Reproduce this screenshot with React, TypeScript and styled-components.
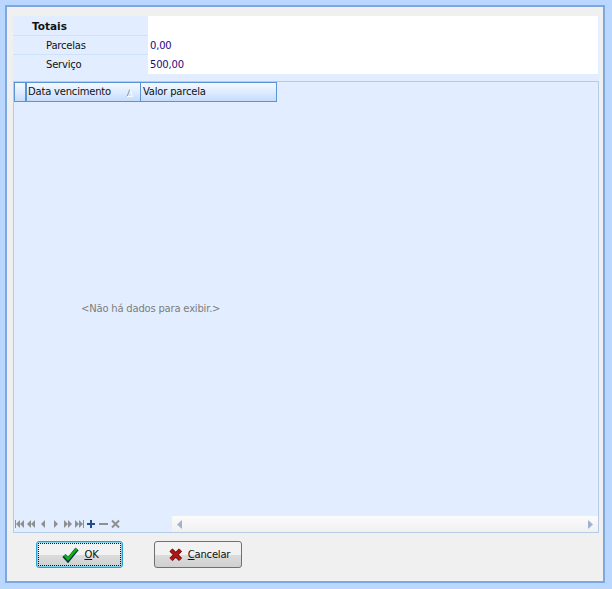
import { createGlobalStyle } from "styled-components";
import styled from "styled-components";

const GlobalStyle = createGlobalStyle`
  html, body {
    margin: 0;
    padding: 0;
    background: #b9d7ff;
  }
  * {
    box-sizing: border-box;
  }
`;

const Frame = styled.div`
  width: 612px;
  height: 589px;
  padding: 5px 7px 6px 5px;
  background: #b9d7ff;
  font-family: "DejaVu Sans", "Liberation Sans", sans-serif;
  font-size: 10px;
  letter-spacing: -0.2px;
  overflow: hidden;
`;

const Dialog = styled.div`
  width: 100%;
  height: 100%;
  border: 2px solid #7ea6e0;
  background: #f0f0f0;
  padding: 9px 4px 0 6px;
  display: flex;
  flex-direction: column;
`;

const Totals = styled.div`
  height: 65px;
  padding-right: 1px;
  background: #e2eeff;
  display: flex;
  flex-direction: column;
`;

const TotalsRow = styled.div<{ $h: number; $last?: boolean }>`
  height: ${(p) => p.$h}px;
  display: grid;
  grid-template-columns: 135px 1fr;
  border-bottom: ${(p) => (p.$last ? "0" : "1px solid #cfe2fa")};
`;

const RowLabel = styled.div<{ $bold?: boolean }>`
  padding-left: ${(p) => (p.$bold ? 19 : 33)}px;
  line-height: ${(p) => (p.$bold ? 21 : 19)}px;
  font-size: ${(p) => (p.$bold ? 10.5 : 10)}px;
  letter-spacing: ${(p) => (p.$bold ? 0 : -0.2)}px;
  font-weight: ${(p) => (p.$bold ? 700 : 400)};
  color: #111;
  white-space: nowrap;
`;

const RowValue = styled.div`
  background: #fff;
  padding-left: 2px;
  line-height: 19px;
  color: #1c0a80;
`;

const Grid = styled.div`
  height: 452px;
  border: 1px solid #b5cbe6;
  background: #e2eeff;
  display: flex;
  flex-direction: column;
`;

const HeaderRow = styled.div`
  display: flex;
  height: 20px;
  width: 263px;
  border: 1px solid #5b93d8;
  background: linear-gradient(#f4f9ff, #dcebff 55%, #c4dcfb);
`;

const Indicator = styled.div`
  width: 12px;
  border-right: 2px solid #5b93d8;
`;

const HeaderCell = styled.div<{ $w: number; $divided?: boolean }>`
  width: ${(p) => p.$w}px;
  padding: 0 7px 0 ${(p) => (p.$divided ? 2 : 1)}px;
  line-height: 18px;
  color: #111;
  display: flex;
  align-items: center;
  justify-content: space-between;
  white-space: nowrap;
  border-left: ${(p) => (p.$divided ? "1px solid #5b93d8" : "0")};
`;

const SortMark = styled.svg`
  width: 7px;
  height: 9px;
`;

const Body = styled.div`
  flex: 1;
  display: flex;
  align-items: center;
  padding-left: 67px;
  padding-bottom: 2px;
  color: #7d7d7d;
`;

const Footer = styled.div`
  height: 16px;
  display: flex;
  align-items: center;
`;

const Navigator = styled.div`
  width: 158px;
  padding-left: 1px;
  display: flex;
  align-items: center;
`;

const NavIcon = styled.svg`
  display: block;
`;

const ScrollBar = styled.div`
  flex: 1;
  height: 16px;
  background: linear-gradient(#fbfbfb, #f0f0f0);
  display: flex;
  align-items: center;
  justify-content: space-between;
  padding: 0 5px;
`;

const Actions = styled.div`
  display: flex;
  padding: 8px 0 0 23px;
  gap: 31px;
`;

const Button = styled.div<{ $focused?: boolean; $w: number }>`
  width: ${(p) => p.$w}px;
  height: 27px;
  border-radius: 3px;
  border: 1px solid ${(p) => (p.$focused ? "#2f9fd0" : "#707070")};
  background: linear-gradient(#f2f2f2 50%, #dcdcdc 50%, #d0d0d0);
  display: flex;
  align-items: center;
  justify-content: center;
  gap: 5px;
  padding-left: 2px;
  color: #111;
  position: relative;
  ${(p) =>
    p.$focused &&
    `box-shadow: inset 0 0 0 1px #7fd4ef;
    &::after {
      content: "";
      position: absolute;
      inset: 1px;
      border: 1px dotted #111;
    }`}
`;

const Underlined = styled.span`
  text-decoration: underline;
`;

const Arrow = ({ dir, x }: { dir: "l" | "r"; x: number }) => (
  <polygon
    fill="#8f8f8f"
    transform={`translate(${x} 1)`}
    points={dir === "l" ? "4,0 0,4 4,8" : "0,0 4,4 0,8"}
  />
);

const Bar = ({ x }: { x: number }) => <rect x={x} y="1" width="1" height="8" fill="#8f8f8f" />;

const navItems: { w: number; draw: React.ReactNode }[] = [
  { w: 12, draw: (<><Bar x={0} /><Arrow dir="l" x={1} /><Arrow dir="l" x={5} /></>) },
  { w: 13, draw: (<><Arrow dir="l" x={0} /><Arrow dir="l" x={4} /></>) },
  { w: 13, draw: <Arrow dir="l" x={1} /> },
  { w: 10, draw: <Arrow dir="r" x={1} /> },
  { w: 12, draw: (<><Arrow dir="r" x={1} /><Arrow dir="r" x={5} /></>) },
  { w: 12, draw: (<><Arrow dir="r" x={0} /><Arrow dir="r" x={4} /><Bar x={8} /></>) },
  { w: 12, draw: <path d="M0 5h8M4 1v8" stroke="#1f4a94" strokeWidth="2" fill="none" /> },
  { w: 12, draw: <path d="M0 5h9" stroke="#8f8f8f" strokeWidth="2" fill="none" /> },
  { w: 10, draw: <path d="M1 1.5l7 7M8 1.5l-7 7" stroke="#8f8f8f" strokeWidth="2" fill="none" /> },
];

const CheckIcon = () => (
  <svg width="17" height="17" viewBox="0 0 17 17">
    <path d="M2 9.5L6 14L15 3" stroke="#06304a" strokeWidth="4.2" fill="none" />
    <path d="M2.5 9L6 13L14.8 2.6" stroke="#12b012" strokeWidth="2.6" fill="none" />
  </svg>
);

const CrossIcon = () => (
  <svg width="15" height="15" viewBox="0 0 15 15">
    <path d="M3 3L12.5 12.5M12.5 3L3 12.5" stroke="#5f0b0b" strokeWidth="4.4" fill="none" />
    <path d="M3 3L12.5 12.5M12.5 3L3 12.5" stroke="#b01616" strokeWidth="2.8" fill="none" />
  </svg>
);

export default function App() {
  return (
    <>
      <GlobalStyle />
      <Frame>
        <Dialog>
          <Totals>
            <TotalsRow $h={20}>
              <RowLabel $bold>Totais</RowLabel>
              <RowValue />
            </TotalsRow>
            <TotalsRow $h={19}>
              <RowLabel>Parcelas</RowLabel>
              <RowValue>0,00</RowValue>
            </TotalsRow>
            <TotalsRow $h={18} $last>
              <RowLabel>Serviço</RowLabel>
              <RowValue>500,00</RowValue>
            </TotalsRow>
          </Totals>
          <Grid>
            <HeaderRow>
              <Indicator />
              <HeaderCell $w={113}>
                Data vencimento
                <SortMark viewBox="0 0 7 9">
                  <path d="M1 8.5L4 1" stroke="#8a97a8" strokeWidth="1" fill="none" />
                  <path d="M4 1L6.5 8.5H1" stroke="#f8fbff" strokeWidth="1" fill="none" />
                </SortMark>
              </HeaderCell>
              <HeaderCell $w={136} $divided>
                Valor parcela
              </HeaderCell>
            </HeaderRow>
            <Body>&lt;Não há dados para exibir.&gt;</Body>
            <Footer>
              <Navigator>
                {navItems.map((item, i) => (
                  <NavIcon key={i} width={item.w} height={10} viewBox={`0 0 ${item.w} 10`}>
                    {item.draw}
                  </NavIcon>
                ))}
              </Navigator>
              <ScrollBar>
                <svg width="5" height="9" viewBox="0 0 5 9">
                  <polygon points="5,0 0,4.5 5,9" fill="#a3b1d0" />
                </svg>
                <svg width="5" height="9" viewBox="0 0 5 9">
                  <polygon points="0,0 5,4.5 0,9" fill="#a3b1d0" />
                </svg>
              </ScrollBar>
            </Footer>
          </Grid>
          <Actions>
            <Button $focused $w={87}>
              <CheckIcon />
              <span>
                <Underlined>O</Underlined>K
              </span>
            </Button>
            <Button $w={88}>
              <CrossIcon />
              <span>
                <Underlined>C</Underlined>ancelar
              </span>
            </Button>
          </Actions>
        </Dialog>
      </Frame>
    </>
  );
}
